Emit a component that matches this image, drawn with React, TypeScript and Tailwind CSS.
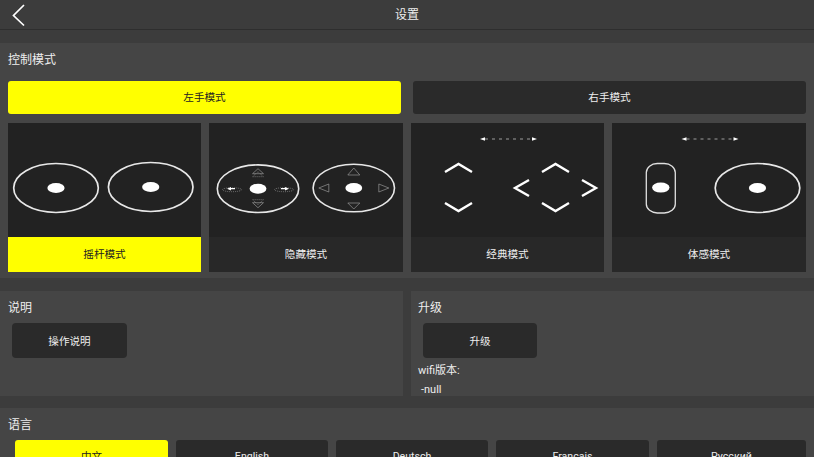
const font = { fontFamily: 'Roboto, "Noto Sans CJK SC", "Noto Sans", sans-serif' };

function Stick({ cx, cy }: { cx: number; cy: number }) {
  return (
    <g>
      <ellipse cx={cx} cy={cy} rx={42.3} ry={24.5} fill="none" stroke="#e8e8e8" strokeWidth={1.7} />
      <ellipse cx={cx} cy={cy} rx={8.6} ry={5} fill="#fff" />
    </g>
  );
}

function HiddenPad({ cx, cy, double }: { cx: number; cy: number; double?: boolean }) {
  const s = "#a8a8a8";
  return (
    <g>
      <ellipse cx={cx} cy={cy} rx={40.7} ry={23.8} fill="none" stroke="#e8e8e8" strokeWidth={1.6} />
      <ellipse cx={cx} cy={cy} rx={8.4} ry={5} fill="#fff" />
      <g fill="none" stroke={s} strokeWidth={0.6}>
        {double ? (
          <>
            <path d={`M${cx - 5.5} ${cy - 15}L${cx} ${cy - 20}L${cx + 5.5} ${cy - 15}Z`} />
            <path d={`M${cx - 5.5} ${cy + 14}L${cx} ${cy + 19}L${cx + 5.5} ${cy + 14}Z`} />
            <path d={`M${cx - 5.5} ${cy - 12}L${cx} ${cy - 17}L${cx + 5.5} ${cy - 12}Z`} strokeDasharray="1 1" />
            <path d={`M${cx - 5.5} ${cy + 11}L${cx} ${cy + 16}L${cx + 5.5} ${cy + 11}Z`} strokeDasharray="1 1" />
            <ellipse cx={cx - 26} cy={cy + 1} rx={9.5} ry={2} strokeDasharray="1 1" />
            <ellipse cx={cx + 26} cy={cy + 1} rx={9.5} ry={2} strokeDasharray="1 1" />
          </>
        ) : (
          <>
            <path d={`M${cx - 6} ${cy - 13}L${cx} ${cy - 20}L${cx + 6} ${cy - 13}Z`} />
            <path d={`M${cx - 6} ${cy + 15}L${cx} ${cy + 21}L${cx + 6} ${cy + 15}Z`} />
            <path d={`M${cx - 35} ${cy}L${cx - 25} ${cy - 4}L${cx - 25} ${cy + 4}Z`} />
            <path d={`M${cx + 35} ${cy}L${cx + 25} ${cy - 4}L${cx + 25} ${cy + 4}Z`} />
          </>
        )}
      </g>
      {double ? (
        <g fill="#fff">
          <path d={`M${cx - 31} ${cy}L${cx - 27} ${cy - 1.8}L${cx - 27} ${cy - 0.6}L${cx - 23} ${cy - 0.6}L${cx - 23} ${cy + 0.6}L${cx - 27} ${cy + 0.6}L${cx - 27} ${cy + 1.8}Z`} />
          <path d={`M${cx + 31} ${cy}L${cx + 27} ${cy - 1.8}L${cx + 27} ${cy - 0.6}L${cx + 23} ${cy - 0.6}L${cx + 23} ${cy + 0.6}L${cx + 27} ${cy + 0.6}L${cx + 27} ${cy + 1.8}Z`} />
        </g>
      ) : null}
    </g>
  );
}

function DashArrow() {
  return (
    <g>
      <path d="M74 16H122" stroke="#bdbdbd" strokeWidth={0.8} strokeDasharray="3 4" />
      <path d="M69 16L74 14.3V17.7Z M126 16L121 14.3V17.7Z" fill="#fff" />
    </g>
  );
}

function Chevrons() {
  return (
    <g fill="none" stroke="#fff" strokeWidth={2.4}>
      <path d="M34 49L47.5 41L61 49" />
      <path d="M34 80L47.5 88L61 80" />
      <path d="M131 49L144.5 41L158 49" />
      <path d="M131 80L144.5 88L158 80" />
      <path d="M118 57L104 65L118 73" />
      <path d="M171 57L185 65L171 73" />
    </g>
  );
}

function ModeImage({ mode }: { mode: number }) {
  return (
    <svg viewBox="0 0 193 114" className="h-[114px] w-full">
      {mode === 0 ? (
        <>
          <Stick cx={48} cy={65} />
          <Stick cx={142.7} cy={64} />
        </>
      ) : null}
      {mode === 1 ? (
        <>
          <HiddenPad cx={48.5} cy={65.7} double />
          <HiddenPad cx={144.3} cy={65} />
        </>
      ) : null}
      {mode === 2 ? (
        <>
          <DashArrow />
          <Chevrons />
        </>
      ) : null}
      {mode === 3 ? (
        <>
          <DashArrow />
          <rect x={33.8} y={40.5} width={29} height={49.5} rx={11} ry={9} fill="none" stroke="#e0e0e0" strokeWidth={1.3} />
          <ellipse cx={48.3} cy={64.6} rx={8.7} ry={5} fill="#fff" />
          <Stick cx={145} cy={65} />
        </>
      ) : null}
    </svg>
  );
}

function ModeCard({ label, mode, active }: { label: string; mode: number; active?: boolean }) {
  return (
    <div className="flex h-[149px] flex-col bg-[#222222]">
      <ModeImage mode={mode} />
      <div
        className={
          active
            ? "flex flex-1 items-center justify-center bg-[#ffff00] pt-[1px] text-[10.6px] text-[#222222]"
            : "flex flex-1 items-center justify-center bg-[#282828] pt-[1px] text-[10.6px] text-[#eeeeee]"
        }
      >
        {label}
      </div>
    </div>
  );
}

function LangButton({ label, active, width }: { label: string; active?: boolean; width: string }) {
  return (
    <div
      className={`${width} flex h-[33px] shrink-0 items-center justify-center rounded-[3px] pt-[1px] text-[10.6px] ${
        active ? "bg-[#ffff00] text-[#222222]" : "bg-[#2a2a2a] text-[#eeeeee]"
      }`}
    >
      {label}
    </div>
  );
}

export default function App() {
  return (
    <div className="h-[457px] w-[814px] overflow-hidden bg-[#3c3c3c] text-white" style={font}>
      <header className="relative flex h-[30px] items-center justify-center border-b border-[#2e2e2e] bg-[#3c3c3c] pt-[1px] text-[12px] text-[#eeeeee]">
        <svg viewBox="0 0 30 30" className="absolute left-0 top-0 h-[30px] w-[30px]">
          <path d="M24 5L13.5 15.5L24 25.5" fill="none" stroke="#fff" strokeWidth={1.7} />
        </svg>
        设置
      </header>

      <section className="mt-[13px] h-[235px] bg-[#454545] px-2">
        <h2 className="flex h-[32px] items-center pt-[1px] text-[12px] font-normal text-[#eeeeee]">控制模式</h2>
        <div className="mt-[6px] grid grid-cols-[393px_393px] gap-[12px]">
          <div className="flex h-[33px] items-center justify-center rounded-[3px] bg-[#ffff00] pt-[1px] text-[10.6px] text-[#222222]">
            左手模式
          </div>
          <div className="flex h-[33px] items-center justify-center rounded-[3px] bg-[#2a2a2a] pt-[1px] text-[10.6px] text-[#eeeeee]">
            右手模式
          </div>
        </div>
        <div className="mt-[9px] grid grid-cols-[193px_194px_193px_194px] gap-[8px]">
          <ModeCard label="摇杆模式" mode={0} active />
          <ModeCard label="隐藏模式" mode={1} />
          <ModeCard label="经典模式" mode={2} />
          <ModeCard label="体感模式" mode={3} />
        </div>
      </section>

      <div className="mt-[13px] grid h-[105px] grid-cols-[403px_403px] gap-[8px]">
        <section className="bg-[#454545] pl-2">
          <h2 className="flex h-[32px] items-center pt-[1px] text-[12px] font-normal text-[#eeeeee]">说明</h2>
          <div className="ml-1 flex h-[35px] w-[115px] items-center justify-center rounded-[4px] bg-[#2a2a2a] pt-[2px] text-[10.6px] text-[#eeeeee]">
            操作说明
          </div>
        </section>
        <section className="overflow-hidden bg-[#454545] pl-[7px]">
          <h2 className="flex h-[32px] items-center pt-[1px] text-[12px] font-normal text-[#eeeeee]">升级</h2>
          <div className="ml-[5px] flex h-[35px] w-[114px] items-center justify-center rounded-[4px] bg-[#2a2a2a] pt-[2px] text-[10.6px] text-[#eeeeee]">
            升级
          </div>
          <p className="mt-[3px] h-[19px] text-[11px] leading-[19px] text-[#eeeeee]">wifi版本:</p>
          <p className="pl-[3px] text-[11px] leading-[19px] text-[#eeeeee]">-null</p>
        </section>
      </div>

      <section className="mt-[12px] h-[60px] bg-[#454545] px-2">
        <h2 className="flex h-[32px] items-center pt-[1px] text-[12px] font-normal text-[#eeeeee]">语言</h2>
        <div className="flex gap-[8px] pl-[7px]">
          <LangButton label="中文" active width="w-[153px]" />
          <LangButton label="English" width="w-[152px]" />
          <LangButton label="Deutsch" width="w-[152px]" />
          <LangButton label="Français" width="w-[153px]" />
          <LangButton label="Русский" width="w-[149px]" />
        </div>
      </section>
    </div>
  );
}
